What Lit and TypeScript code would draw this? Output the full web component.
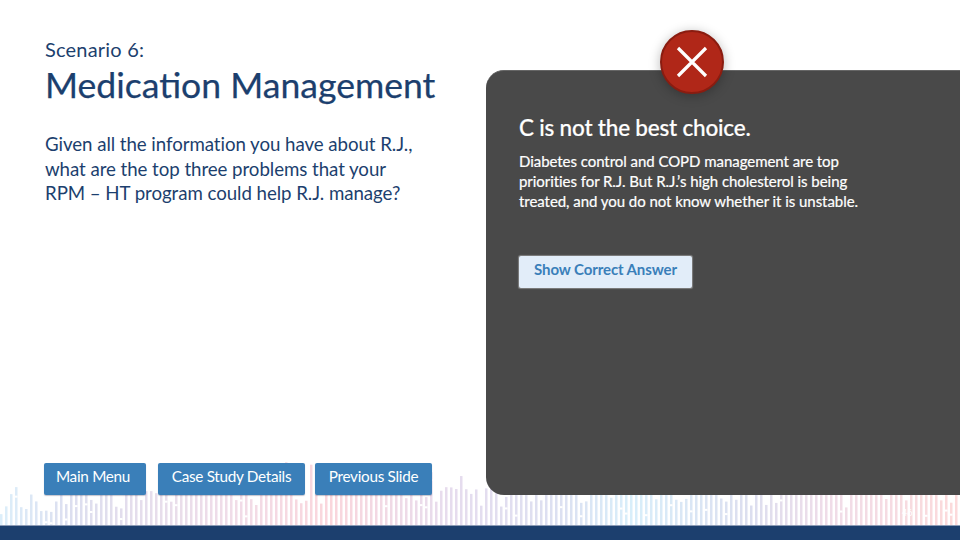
import { LitElement, html, css, svg } from "lit";
import { customElement } from "lit/decorators.js";

const STOPS: [number, number[]][] = [
  [0, [220, 238, 250]],
  [70, [220, 222, 239]],
  [230, [240, 220, 232]],
  [330, [250, 214, 220]],
  [450, [230, 220, 238]],
  [560, [220, 224, 241]],
  [630, [216, 238, 250]],
  [750, [220, 222, 239]],
  [830, [240, 220, 232]],
  [960, [252, 218, 218]],
];

function colorAt(x: number): string {
  for (let i = 0; i < STOPS.length - 1; i++) {
    const [a, ca] = STOPS[i];
    const [b, cb] = STOPS[i + 1];
    if (x <= b) {
      const t = (x - a) / (b - a);
      const c = ca.map((v, k) => Math.round(v + (cb[k] - v) * t));
      return `rgb(${c[0]},${c[1]},${c[2]})`;
    }
  }
  return "rgb(252,218,218)";
}

function bars() {
  let seed = 23;
  const rnd = () => {
    seed = (seed * 16807) % 2147483647;
    return seed / 2147483647;
  };
  const out = [];
  for (let x = 0; x < 960; x += 5) {
    const r = rnd();
    let h: number;
    if (x < 65) h = 10 + rnd() * 34;
    else if (r < 0.62) h = 31 + rnd() * 8;
    else if (r < 0.9) h = 16 + rnd() * 15;
    else h = 40 + rnd() * 24;
    const top = 525 - h;
    const c = colorAt(x);
    out.push(svg`<rect x=${x} y=${top} width="2.5" height=${h} fill=${c}></rect>`);
    if (rnd() > 0.85) {
      out.push(svg`<rect x=${x} y=${top + 6 + rnd() * (h * 0.6)} width="2.5" height="2" fill="#fff"></rect>`);
    }
  }
  return out;
}

@customElement("app-root")
export class AppRoot extends LitElement {
  static styles = css`
    :host {
      display: block;
      width: 960px;
      height: 540px;
      overflow: hidden;
      font-family: "Lato", "Open Sans", sans-serif;
    }
    .stage {
      position: relative;
      width: 960px;
      height: 540px;
      background: #fff;
      display: flex;
      flex-direction: column;
    }
    .wave {
      position: absolute;
      left: 0;
      top: 0;
      width: 960px;
      height: 540px;
    }
    .pageno {
      position: absolute;
      left: 902px;
      top: 507px;
      font-size: 9px;
      line-height: 11px;
      color: #fff;
    }
    .main {
      position: relative;
      flex: 1;
      min-height: 0;
      display: flex;
      padding-bottom: 30px;
    }
    .left {
      width: 486px;
      box-sizing: border-box;
      padding: 38px 0 0 45px;
      display: flex;
      flex-direction: column;
      color: #1c3f6e;
    }
    .eyebrow {
      font-size: 20px;
      line-height: 23px;
      letter-spacing: 0.2px;
    }
    h1 {
      margin: 2px 0 0;
      font-size: 35.6px;
      line-height: 44px;
      font-weight: 400;
      white-space: nowrap;
      -webkit-text-stroke: 0.25px #1c3f6e;
    }
    .question {
      margin: 25px 0 0;
      font-size: 18.7px;
      line-height: 24.5px;
      letter-spacing: -0.06px;
      white-space: nowrap;
    }
    .nav {
      margin-top: auto;
      margin-left: -1px;
      display: flex;
      gap: 12px;
    }
    .nav button {
      height: 32px;
      border: none;
      border-radius: 2px;
      background: #3a7fb9;
      color: #fff;
      font-family: inherit;
      font-size: 15.3px;
      letter-spacing: -0.3px;
      padding: 0 0 7px;
      box-shadow: 0 1px 1px rgba(60, 60, 90, 0.3);
    }
    .nav .a { width: 102px; padding-right: 4px; }
    .nav .b { width: 147px; }
    .nav .c { width: 117px; margin-left: -2px; }
    .panel {
      margin-top: 70px;
      flex: 1;
      box-sizing: border-box;
      background: rgba(70, 70, 70, 0.985);
      border-top: 1px solid #666;
      border-radius: 18px 0 0 18px;
      padding: 45px 80px 0 33px;
      color: #fff;
    }
    .panel h2 {
      margin: 0;
      font-size: 22.5px;
      line-height: 24px;
      font-weight: 500;
      letter-spacing: -0.2px;
      white-space: nowrap;
      -webkit-text-stroke: 0.2px #fff;
    }
    .panel p {
      margin: 11px 0 0;
      font-size: 15px;
      line-height: 20px;
      letter-spacing: -0.05px;
      white-space: nowrap;
      -webkit-text-stroke: 0.2px #fff;
    }
    .show {
      display: block;
      margin-top: 45px;
      width: 173px;
      height: 32px;
      border: none;
      border-radius: 2px;
      background: #e2edf9;
      color: #3a7fb9;
      font-family: inherit;
      font-weight: 700;
      font-size: 15px;
      letter-spacing: -0.1px;
      padding: 0 0 7px;
      box-shadow: 0 0 1px 0.5px rgba(255, 255, 255, 0.3);
    }
    .badge {
      position: absolute;
      left: 660px;
      top: 30px;
      width: 64px;
      height: 64px;
      box-sizing: border-box;
      border-radius: 50%;
      background: #b02718;
      border: 2px solid #8a1c10;
      box-shadow: 0 2px 12px rgba(0, 0, 0, 0.28);
      display: flex;
      align-items: center;
      justify-content: center;
    }
    .badge svg {
      display: block;
    }
    .band {
      position: relative;
      height: 15px;
      flex: none;
      background: #1c3f6e;
      border-top: 1px solid #8c9bb5;
      box-sizing: border-box;
    }
  `;

  render() {
    return html`
      <div class="stage">
        <svg class="wave" viewBox="0 0 960 540" aria-hidden="true">${bars()}</svg>
        <div class="pageno">46</div>
        <div class="main">
          <section class="left">
            <div class="eyebrow">Scenario 6:</div>
            <h1>Medication Management</h1>
            <p class="question">
              Given all the information you have about R.J.,<br />
              what are the top three problems that your<br />
              RPM – HT program could help R.J. manage?
            </p>
            <nav class="nav">
              <button class="a">Main Menu</button>
              <button class="b">Case Study Details</button>
              <button class="c">Previous Slide</button>
            </nav>
          </section>
          <section class="panel">
            <h2>C is not the best choice.</h2>
            <p>
              Diabetes control and COPD management are top<br />
              priorities for R.J. But R.J.’s high cholesterol is being<br />
              treated, and you do not know whether it is unstable.
            </p>
            <button class="show">Show Correct Answer</button>
          </section>
          <div class="badge">
            <svg width="32" height="32" viewBox="0 0 32 32">
              <path d="M2 2 L30 30 M30 2 L2 30" stroke="#fff" stroke-width="3.2" fill="none"></path>
            </svg>
          </div>
        </div>
        <div class="band"></div>
      </div>
    `;
  }
}
